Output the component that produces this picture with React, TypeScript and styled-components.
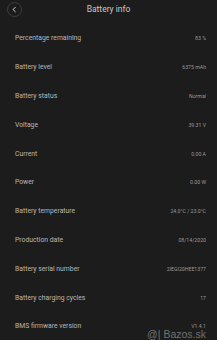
import React from "react";
import styled, { createGlobalStyle } from "styled-components";

const GlobalStyle = createGlobalStyle`
  html, body {
    margin: 0;
    padding: 0;
    background: #1c1c1c;
  }
  body {
    font-family: Roboto, "Liberation Sans", sans-serif;
  }
`;

const Screen = styled.div`
  width: 217px;
  height: 340px;
  background: #1c1c1c;
  position: relative;
  overflow: hidden;
`;

const Header = styled.div`
  height: 24px;
  display: grid;
  grid-template-columns: 30px 1fr 30px;
  align-items: start;
  padding-top: 1px;
  box-sizing: border-box;
`;

const BackButton = styled.div`
  width: 15px;
  height: 15px;
  margin-left: 7px;
  margin-top: 1px;
  border-radius: 50%;
  border: 1px solid #3e3e3e;
  display: flex;
  align-items: center;
  justify-content: center;
  box-sizing: border-box;
`;

const Title = styled.div`
  text-align: center;
  color: #c8c8c8;
  font-size: 8.5px;
  line-height: 17px;
`;

const List = styled.div`
  display: flex;
  flex-direction: column;
`;

const Row = styled.div`
  height: 28.8px;
  display: flex;
  align-items: center;
  justify-content: space-between;
  padding: 0 11px 0 15px;
`;

const Label = styled.span`
  color: #b8b8b8;
  font-size: 6.8px;
`;

const Value = styled.span`
  color: #9a9a9a;
  font-size: 5.2px;
`;

const Watermark = styled.div`
  position: absolute;
  right: 11px;
  bottom: 1px;
  line-height: 10px;
  color: rgba(200, 200, 200, 0.5);
  font-family: "Liberation Sans", sans-serif;
  font-size: 10.5px;
`;

const rows: [string, string][] = [
  ["Percentage remaining", "83 %"],
  ["Battery level", "6375 mAh"],
  ["Battery status", "Normal"],
  ["Voltage", "39.31 V"],
  ["Current", "0.00 A"],
  ["Power", "0.00 W"],
  ["Battery temperature", "24.0°C / 23.0°C"],
  ["Production date", "08/14/2020"],
  ["Battery serial number", "2IEGI20HEE1377"],
  ["Battery charging cycles", "17"],
  ["BMS firmware version", "V1.4.1"],
];

export default function App() {
  return (
    <Screen>
      <GlobalStyle />
      <Header>
        <BackButton>
          <svg width="7" height="7" viewBox="0 0 10 10">
            <path d="M6.5 1.5 L3 5 L6.5 8.5" stroke="#e0e0e0" strokeWidth="1.4" fill="none" />
          </svg>
        </BackButton>
        <Title>Battery info</Title>
        <div />
      </Header>
      <List>
        {rows.map(([label, value]) => (
          <Row key={label}>
            <Label>{label}</Label>
            <Value>{value}</Value>
          </Row>
        ))}
      </List>
      <Watermark>@| Bazos.sk</Watermark>
    </Screen>
  );
}
